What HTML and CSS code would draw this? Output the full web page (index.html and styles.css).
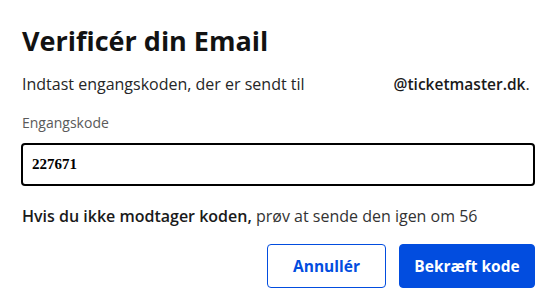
FILE: index.html
```html
<!DOCTYPE html>
<html lang="da">
<head>
<meta charset="utf-8">
<title>Verificér din Email</title>
<link rel="stylesheet" href="styles.css">
</head>
<body>
<main class="dialog">
  <h1 class="title">Verificér din Email</h1>
  <p class="intro">Indtast engangskoden, der er sendt til<span class="redacted"></span><span class="domain">@ticketmaster.dk</span>.</p>
  <label class="label" for="code">Engangskode</label>
  <div class="field"><input id="code" class="input" type="text" value="227671"></div>
  <p class="resend"><strong>Hvis du ikke modtager koden,</strong> prøv at sende den igen om 56</p>
  <div class="actions">
    <button class="btn btn-outline" type="button">Annullér</button>
    <button class="btn btn-primary" type="button">Bekræft kode</button>
  </div>
</main>
</body>
</html>
```
FILE: styles.css
```css
html, body {
  margin: 0;
  padding: 0;
  background: #ffffff;
}
body {
  font-family: "Open Sans", "Noto Sans", sans-serif;
  color: #1f1f1f;
}
.dialog {
  padding: 24px 12px 0 21px;
  display: flex;
  flex-direction: column;
}
.title {
  margin: 0 0 0 1px;
  font-size: 27px;
  line-height: 34px;
  font-weight: 700;
  color: #121212;
}
.intro {
  margin: 16px 0 0 1px;
  font-size: 16px;
  line-height: 20px;
  color: #262626;
}
.redacted {
  display: inline-block;
  width: 89px;
}
.domain {
  font-weight: 600;
  font-size: 15.5px;
  color: #1a1a1a;
}
.label {
  margin: 20px 0 0 1px;
  font-size: 14px;
  line-height: 18px;
  color: #5a5a5a;
}
.field {
  margin-top: 11px;
}
.input {
  box-sizing: border-box;
  display: block;
  width: 100%;
  height: 43px;
  border: 2px solid #000000;
  border-radius: 4px;
  padding: 0 9px;
  font-family: "Liberation Serif", serif;
  font-weight: 700;
  font-size: 15px;
  color: #000000;
  outline: none;
}
.resend {
  margin: 20px 0 0 1px;
  font-size: 16px;
  line-height: 20px;
  color: #333333;
}
.resend strong {
  color: #1a1a1a;
  font-weight: 600;
}
.actions {
  margin-top: 18px;
  display: flex;
  justify-content: flex-end;
  gap: 13px;
}
.btn {
  height: 44px;
  border-radius: 4px;
  font-family: "Open Sans", "Noto Sans", sans-serif;
  font-size: 15.5px;
  font-weight: 700;
  padding: 0;
  cursor: pointer;
}
.btn-outline {
  width: 119px;
  background: #ffffff;
  border: 1px solid #024ddf;
  color: #024ddf;
}
.btn-primary {
  width: 136px;
  background: #024ddf;
  border: 1px solid #024ddf;
  color: #ffffff;
}
```
